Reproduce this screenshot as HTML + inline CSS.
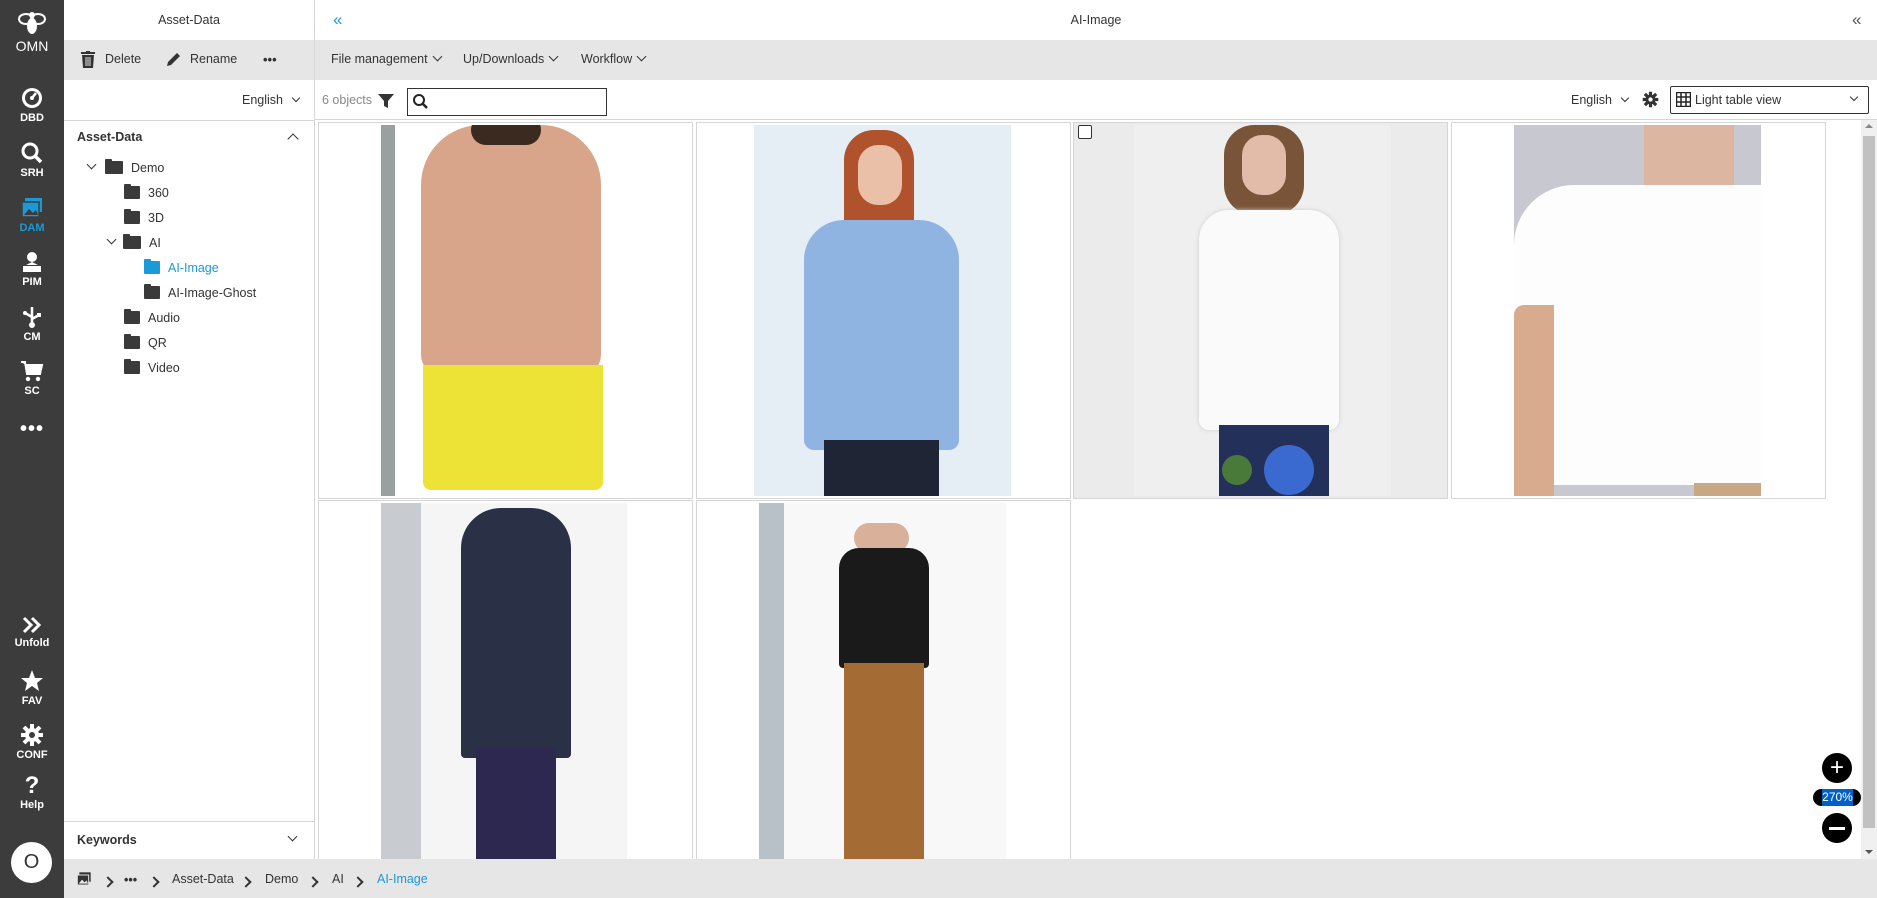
<!DOCTYPE html>
<html><head><meta charset="utf-8"><style>
*{box-sizing:border-box;margin:0;padding:0}
body{width:1877px;height:898px;overflow:hidden;font-family:"Liberation Sans",sans-serif;font-size:13px;color:#333;background:#fff;position:relative}
.abs{position:absolute}
.sb{left:0;top:0;width:64px;height:898px;background:#3c3c3c;color:#fff}
.sbi{position:absolute;left:0;width:64px;text-align:center;font-size:11px;font-weight:bold}
.sbi svg{display:block;margin:0 auto 2px}
.gray{background:#e6e6e6}
.tree div{position:absolute;font-size:12.5px;height:20px;line-height:20px}
.fold{display:inline-block;width:16px;height:13px;background:#3a3a3a;border-radius:1px;vertical-align:-2px;margin-right:8px;position:relative}
.fold:before{content:"";position:absolute;left:0;top:-2px;width:7px;height:3px;background:inherit;border-radius:1px 1px 0 0}
.tile{position:absolute;width:375px;height:377px;border:1px solid #d6d6d6;overflow:hidden;background:#fff}
.img{position:absolute;top:2px;overflow:hidden}
.chev{display:inline-block;width:7px;height:7px;border-right:1.6px solid #333;border-bottom:1.6px solid #333;transform:rotate(45deg);margin-left:6px;vertical-align:3px}
.bc{position:absolute;top:872px;font-size:12.5px}
.arr{display:inline-block;width:8px;height:8px;border-right:2px solid #333;border-top:2px solid #333;transform:rotate(45deg)}
</style></head><body>

<div class="abs sb">
 <div class="sbi" style="top:10px;font-size:14px;font-weight:normal">
  <svg width="30" height="26" viewBox="0 0 30 26"><ellipse cx="9" cy="9" rx="7" ry="5" fill="none" stroke="#fff" stroke-width="2"/><ellipse cx="21" cy="9" rx="7" ry="5" fill="none" stroke="#fff" stroke-width="2"/><ellipse cx="15" cy="16" rx="5" ry="8" fill="#fff"/><circle cx="15" cy="5" r="3" fill="#fff"/></svg>OMN</div>
 <div class="sbi" style="top:86px"><svg width="24" height="24" viewBox="0 0 24 24"><circle cx="12" cy="12" r="10" fill="#fff"/><circle cx="12" cy="12" r="7" fill="#3c3c3c"/><path d="M12 12 L16 7" stroke="#fff" stroke-width="2.5"/><circle cx="12" cy="12" r="2" fill="#fff"/></svg>DBD</div>
 <div class="sbi" style="top:141px"><svg width="24" height="24" viewBox="0 0 24 24"><circle cx="10" cy="10" r="7" fill="none" stroke="#fff" stroke-width="3"/><path d="M15 15 L21 21" stroke="#fff" stroke-width="3.5"/></svg>SRH</div>
 <div class="sbi" style="top:196px;color:#1a9ad6"><svg width="24" height="24" viewBox="0 0 24 24"><rect x="5" y="2" width="17" height="14" fill="#1a9ad6"/><rect x="2" y="6" width="17" height="15" fill="#1a9ad6" stroke="#3c3c3c" stroke-width="1.5"/><path d="M4 19 L9 13 L13 17 L16 14 L18 19Z" fill="#3c3c3c"/></svg>DAM</div>
 <div class="sbi" style="top:250px"><svg width="24" height="24" viewBox="0 0 24 24"><circle cx="12" cy="7" r="5" fill="#fff"/><path d="M3 16 h18 v6 h-18z" fill="#fff"/><path d="M6 15 l6 -3 6 3" fill="#fff"/></svg>PIM</div>
 <div class="sbi" style="top:305px"><svg width="24" height="24" viewBox="0 0 24 24"><path d="M12 2 V20 M12 12 L5 8 M12 14 L19 10" stroke="#fff" stroke-width="2.5"/><circle cx="12" cy="20" r="3" fill="#fff"/><circle cx="5" cy="8" r="2" fill="#fff"/><rect x="17" y="8" width="4" height="4" fill="#fff"/></svg>CM</div>
 <div class="sbi" style="top:359px"><svg width="24" height="24" viewBox="0 0 24 24"><path d="M1 3 H5 L7 15 H20 L22 6 H6" fill="#fff" stroke="#fff" stroke-width="2"/><circle cx="8" cy="20" r="2.2" fill="#fff"/><circle cx="18" cy="20" r="2.2" fill="#fff"/></svg>SC</div>
 <div class="sbi" style="top:418px;font-size:20px;letter-spacing:1px">•••</div>
 <div class="sbi" style="top:615px"><svg width="22" height="20" viewBox="0 0 22 20"><path d="M3 3 L10 10 L3 17 M11 3 L18 10 L11 17" fill="none" stroke="#fff" stroke-width="3"/></svg>Unfold</div>
 <div class="sbi" style="top:669px"><svg width="24" height="24" viewBox="0 0 24 24"><path d="M12 1 L15 9 L23 9 L17 14 L19 22 L12 17 L5 22 L7 14 L1 9 L9 9Z" fill="#fff"/></svg>FAV</div>
 <div class="sbi" style="top:723px"><svg width="24" height="24" viewBox="0 0 24 24"><circle cx="12" cy="12" r="7" fill="#fff"/><path d="M12 1v22M1 12h22M4 4l16 16M20 4L4 20" stroke="#fff" stroke-width="4"/><circle cx="12" cy="12" r="3" fill="#3c3c3c"/></svg>CONF</div>
 <div class="sbi" style="top:774px;font-size:24px;line-height:24px">?<div style="font-size:11px;line-height:14px">Help</div></div>
 <div style="position:absolute;left:11px;top:842px;width:41px;height:41px;border-radius:50%;background:#fff;color:#333;font-size:20px;text-align:center;line-height:41px">O</div>
</div>

<div class="abs" style="left:64px;top:0;width:250px;height:40px;text-align:center;line-height:40px;font-size:12.5px">Asset-Data</div>
<div class="abs gray" style="left:64px;top:40px;width:250px;height:40px"></div>
<div class="abs" style="left:81px;top:51px"><svg width="14" height="17" viewBox="0 0 14 17"><rect x="0" y="1" width="14" height="2" fill="#333"/><rect x="5" y="0" width="4" height="2" fill="#333"/><path d="M1 4 H13 L12 17 H2Z" fill="#333"/><path d="M5 6v9M7 6v9M9 6v9" stroke="#e6e6e6" stroke-width="1"/></svg></div>
<div class="abs" style="left:105px;top:52px;font-size:12.5px">Delete</div>
<div class="abs" style="left:165px;top:51px"><svg width="17" height="17" viewBox="0 0 17 17"><path d="M2 15 L3 11 L12 2 L15 5 L6 14Z" fill="#333"/></svg></div>
<div class="abs" style="left:190px;top:52px;font-size:12.5px">Rename</div>
<div class="abs" style="left:263px;top:52px;font-size:13px;font-weight:bold">•••</div>
<div class="abs" style="left:242px;top:93px;font-size:12.5px">English<span class="chev" style="width:6px;height:6px;border-width:1.2px;margin-left:10px"></span></div>
<div class="abs" style="left:64px;top:120px;width:251px;height:1px;background:#d6d6d6"></div>
<div class="abs" style="left:77px;top:130px;font-size:12.5px;font-weight:bold">Asset-Data</div>
<div class="abs" style="left:289px;top:135px;width:8px;height:8px;border-left:1.6px solid #333;border-top:1.6px solid #333;transform:rotate(45deg)"></div>
<div class="tree">
 <div style="left:88px;top:158px"><span class="chev" style="width:7px;height:7px;margin:0 10px 0 0;vertical-align:4px"></span><span class="fold" style="width:18px"></span>Demo</div>
 <div style="left:124px;top:183px"><span class="fold"></span>360</div>
 <div style="left:124px;top:208px"><span class="fold"></span>3D</div>
 <div style="left:108px;top:233px"><span class="chev" style="width:7px;height:7px;margin:0 8px 0 0;vertical-align:4px"></span><span class="fold" style="width:18px"></span>AI</div>
 <div style="left:144px;top:258px;color:#1a9ad6"><span class="fold" style="background:#1a9ad6"></span>AI-Image</div>
 <div style="left:144px;top:283px"><span class="fold"></span>AI-Image-Ghost</div>
 <div style="left:124px;top:308px"><span class="fold"></span>Audio</div>
 <div style="left:124px;top:333px"><span class="fold"></span>QR</div>
 <div style="left:124px;top:358px"><span class="fold"></span>Video</div>
</div>
<div class="abs" style="left:64px;top:821px;width:251px;height:1px;background:#d6d6d6"></div>
<div class="abs" style="left:77px;top:833px;font-size:12.5px;font-weight:bold">Keywords</div>
<div class="abs" style="left:289px;top:833px;width:7px;height:7px;border-right:1.6px solid #333;border-bottom:1.6px solid #333;transform:rotate(45deg)"></div>
<div class="abs" style="left:314px;top:0;width:1px;height:859px;background:#d6d6d6"></div>

<div class="abs" style="left:333px;top:10px;color:#1a9ad6;font-size:17px">«</div>
<div class="abs" style="left:315px;top:0;width:1562px;height:40px;text-align:center;line-height:40px;font-size:12.5px">AI-Image</div>
<div class="abs" style="left:1852px;top:10px;color:#555;font-size:17px">«</div>
<div class="abs gray" style="left:315px;top:40px;width:1562px;height:40px"></div>
<div class="abs" style="left:331px;top:52px;font-size:12.5px">File management<span class="chev"></span></div>
<div class="abs" style="left:463px;top:52px;font-size:12.5px">Up/Downloads<span class="chev"></span></div>
<div class="abs" style="left:581px;top:52px;font-size:12.5px">Workflow<span class="chev"></span></div>
<div class="abs" style="left:322px;top:93px;color:#888;font-size:12.5px">6 objects</div>
<div class="abs" style="left:378px;top:93px"><svg width="16" height="16" viewBox="0 0 16 16"><path d="M0 1 H16 L10 8 V15 L6 13 V8Z" fill="#333"/></svg></div>
<div class="abs" style="left:407px;top:88px;width:200px;height:28px;border:1.5px solid #333"></div>
<div class="abs" style="left:412px;top:93px"><svg width="17" height="17" viewBox="0 0 17 17"><circle cx="7" cy="7" r="5" fill="none" stroke="#222" stroke-width="2"/><path d="M10.5 10.5 L15 15" stroke="#222" stroke-width="2.5"/></svg></div>
<div class="abs" style="left:1571px;top:93px;font-size:12.5px">English<span class="chev" style="width:6px;height:6px;border-width:1.2px;margin-left:10px"></span></div>
<div class="abs" style="left:1642px;top:91px"><svg width="17" height="17" viewBox="0 0 24 24"><circle cx="12" cy="12" r="7" fill="#333"/><path d="M12 1v22M1 12h22M4 4l16 16M20 4L4 20" stroke="#333" stroke-width="4.5"/><circle cx="12" cy="12" r="3" fill="#fff"/></svg></div>
<div class="abs" style="left:1670px;top:86px;width:199px;height:28px;border:1.5px solid #333;border-radius:2px"></div>
<div class="abs" style="left:1676px;top:92px"><svg width="15" height="15" viewBox="0 0 15 15"><rect x="0.5" y="0.5" width="14" height="14" fill="none" stroke="#222" stroke-width="1.5"/><path d="M5 0v15M10 0v15M0 5h15M0 10h15" stroke="#222" stroke-width="1.5"/></svg></div>
<div class="abs" style="left:1695px;top:93px;font-size:12.5px">Light table view</div>
<div class="abs" style="left:1851px;top:94px;width:6px;height:6px;border-right:1.2px solid #333;border-bottom:1.2px solid #333;transform:rotate(45deg)"></div>
<div class="abs" style="left:315px;top:119px;width:1562px;height:1px;background:#d6d6d6"></div>

<div class="tile" style="left:318px;top:122px">
 <div class="img" style="left:62px;width:246px;height:371px;background:#fff">
  <div class="abs" style="left:0;top:0;width:14px;height:371px;background:#9aa0a0"></div>
  <div class="abs" style="left:40px;top:0;width:180px;height:250px;background:#d9a58a;border-radius:60px 60px 20px 20px"></div>
  <div class="abs" style="left:90px;top:-10px;width:70px;height:30px;background:#3a2a20;border-radius:30px"></div>
  <div class="abs" style="left:42px;top:240px;width:180px;height:125px;background:#ece336;border-radius:0 0 8px 8px"></div>
 </div>
</div>
<div class="tile" style="left:696px;top:122px">
 <div class="img" style="left:57px;width:257px;height:371px;background:#e5edf5">
  <div class="abs" style="left:90px;top:5px;width:70px;height:120px;background:#b0522c;border-radius:30px"></div>
  <div class="abs" style="left:104px;top:20px;width:44px;height:60px;background:#eac0a8;border-radius:20px"></div>
  <div class="abs" style="left:50px;top:95px;width:155px;height:230px;background:#8fb4e2;border-radius:40px 40px 10px 10px"></div>
  <div class="abs" style="left:70px;top:315px;width:115px;height:60px;background:#202535"></div>
 </div>
</div>
<div class="tile" style="left:1073px;top:122px;background:#ebebeb">
 <div class="img" style="left:60px;width:257px;height:371px;background:#efefef">
  <div class="abs" style="left:90px;top:0;width:80px;height:90px;background:#7a5438;border-radius:30px"></div>
  <div class="abs" style="left:108px;top:10px;width:44px;height:60px;background:#e2bca8;border-radius:20px"></div>
  <div class="abs" style="left:65px;top:85px;width:140px;height:220px;background:#fafafa;border-radius:30px 30px 10px 10px;box-shadow:0 0 4px #ccc"></div>
  <div class="abs" style="left:85px;top:300px;width:110px;height:75px;background:#23305a"></div>
  <div class="abs" style="left:130px;top:320px;width:50px;height:50px;background:#3a6ad0;border-radius:50%"></div>
  <div class="abs" style="left:88px;top:330px;width:30px;height:30px;background:#4a7a3a;border-radius:50%"></div>
 </div>
 <div class="abs" style="left:4px;top:2px;width:14px;height:14px;border:1.2px solid #333;background:#fff;border-radius:2px"></div>
</div>
<div class="tile" style="left:1451px;top:122px">
 <div class="img" style="left:62px;width:247px;height:371px;background:#c8c8d0">
  <div class="abs" style="left:130px;top:0;width:90px;height:80px;background:#dcb6a0"></div>
  <div class="abs" style="left:0;top:60px;width:247px;height:300px;background:#fdfdfd;border-radius:60px 0 0 0"></div>
  <div class="abs" style="left:0;top:180px;width:40px;height:191px;background:#d8aa8e;border-radius:10px 0 0 0"></div>
  <div class="abs" style="left:180px;top:358px;width:67px;height:13px;background:#c8a884"></div>
 </div>
</div>
<div class="tile" style="left:318px;top:500px">
 <div class="img" style="left:62px;width:246px;height:371px;background:#f5f5f5">
  <div class="abs" style="left:0;top:0;width:40px;height:371px;background:#c8ccd0"></div>
  <div class="abs" style="left:80px;top:5px;width:110px;height:250px;background:#2a3045;border-radius:40px 40px 4px 4px"></div>
  <div class="abs" style="left:95px;top:245px;width:80px;height:126px;background:#2c2850"></div>
 </div>
</div>
<div class="tile" style="left:696px;top:500px">
 <div class="img" style="left:62px;width:247px;height:371px;background:#f8f8f8">
  <div class="abs" style="left:0;top:0;width:25px;height:371px;background:#b8c0c8"></div>
  <div class="abs" style="left:95px;top:20px;width:55px;height:30px;background:#d9b09a;border-radius:20px"></div>
  <div class="abs" style="left:80px;top:45px;width:90px;height:120px;background:#1a1a1a;border-radius:20px 20px 4px 4px"></div>
  <div class="abs" style="left:85px;top:160px;width:80px;height:200px;background:#a46c34"></div>
 </div>
</div>

<div class="abs" style="left:1861px;top:120px;width:16px;height:739px;background:#f0f0f0"></div>
<div class="abs" style="left:1863px;top:136px;width:12px;height:692px;background:#c1c1c1"></div>
<div class="abs" style="left:1865px;top:124px;border:4px solid transparent;border-bottom-color:#888;border-top:0"></div>
<div class="abs" style="left:1865px;top:850px;border:4px solid transparent;border-top-color:#555;border-bottom:0"></div>

<div class="abs" style="left:1822px;top:753px;width:30px;height:30px;border-radius:50%;background:#000;color:#fff;text-align:center;line-height:29px;font-size:24px">+</div>
<div class="abs" style="left:1813px;top:789px;width:48px;height:17px;border-radius:9px;background:#000"></div>
<div class="abs" style="left:1822px;top:789px;width:31px;height:17px;background:#0060c8;color:#fff;font-size:12px;line-height:17px;text-align:center">270%</div>
<div class="abs" style="left:1822px;top:813px;width:30px;height:30px;border-radius:50%;background:#000"></div>
<div class="abs" style="left:1829px;top:827px;width:16px;height:3px;background:#fff"></div>

<div class="abs gray" style="left:64px;top:859px;width:1813px;height:39px"></div>
<div class="abs" style="left:76px;top:871px"><svg width="16" height="16" viewBox="0 0 24 24"><rect x="5" y="2" width="17" height="14" fill="#333"/><rect x="2" y="6" width="17" height="15" fill="#333" stroke="#e6e6e6" stroke-width="1.5"/><path d="M4 19 L9 13 L13 17 L16 14 L18 19Z" fill="#e6e6e6"/></svg></div>
<div class="bc" style="left:104px;top:875px"><span class="arr"></span></div>
<div class="bc" style="left:124px;top:873px;font-weight:bold">•••</div>
<div class="bc" style="left:150px;top:875px"><span class="arr"></span></div>
<div class="bc" style="left:172px">Asset-Data</div>
<div class="bc" style="left:242px;top:875px"><span class="arr"></span></div>
<div class="bc" style="left:265px">Demo</div>
<div class="bc" style="left:309px;top:875px"><span class="arr"></span></div>
<div class="bc" style="left:332px">AI</div>
<div class="bc" style="left:354px;top:875px"><span class="arr"></span></div>
<div class="bc" style="left:377px;color:#1a9ad6">AI-Image</div>
</body></html>
